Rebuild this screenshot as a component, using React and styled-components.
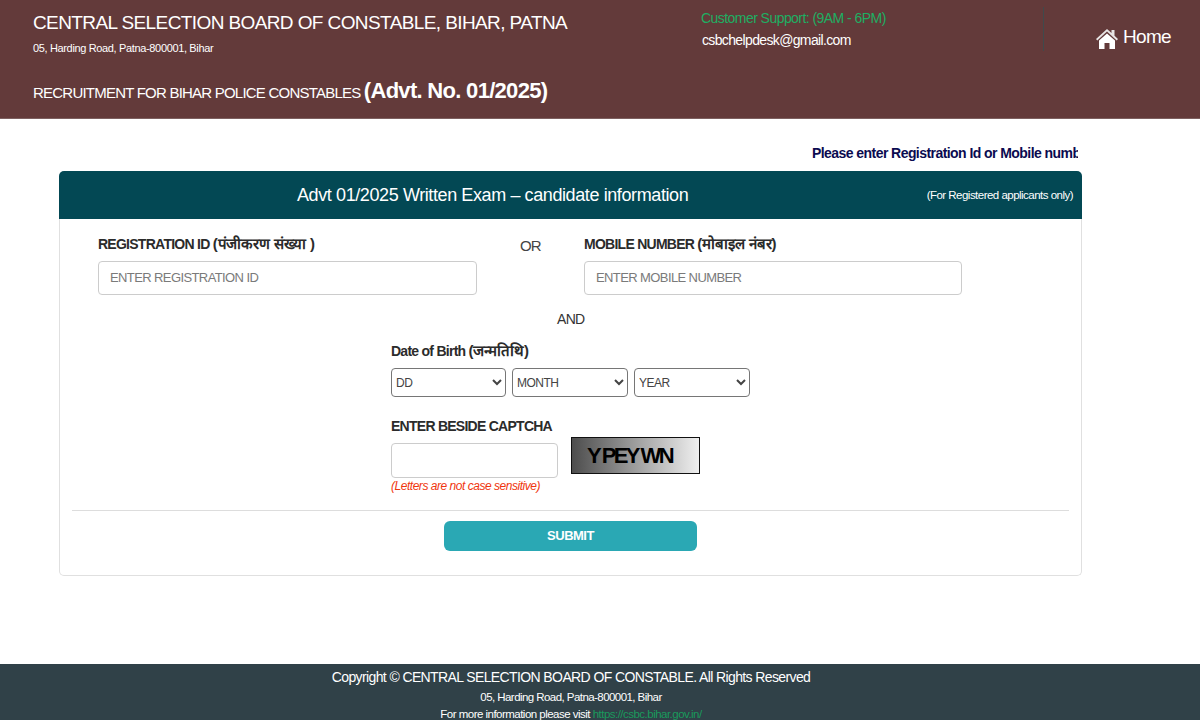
import React from "react";
import styled, { createGlobalStyle } from "styled-components";

const GlobalStyle = createGlobalStyle`
  html, body {
    margin: 0;
    padding: 0;
    background: #fff;
    font-family: "Liberation Sans", Arial, sans-serif;
  }
  * { box-sizing: border-box; }
`;

const Page = styled.div`
  width: 1200px;
  height: 720px;
  overflow: hidden;
  display: flex;
  flex-direction: column;
`;

const Header = styled.header`
  height: 119px;
  flex: none;
  background: #633a3a;
  border-bottom: 1px solid #7d6060;
  display: flex;
  color: #fff;
`;

const Brand = styled.div`
  width: 700px;
  padding: 11px 0 0 33px;
`;

const BoardName = styled.div`
  font-size: 19px;
  line-height: 23px;
  letter-spacing: -0.6px;
`;

const BoardAddress = styled.div`
  margin-top: 8px;
  font-size: 11px;
  line-height: 13px;
  letter-spacing: -0.35px;
`;

const Recruitment = styled.div`
  margin-top: 22px;
  font-size: 15px;
  line-height: 28px;
  letter-spacing: -0.78px;

  b {
    font-size: 22px;
    letter-spacing: -0.7px;
  }
`;

const Support = styled.div`
  width: 343px;
  padding: 10px 0 0 1px;
`;

const SupportTime = styled.div`
  font-size: 14px;
  line-height: 16px;
  color: #1eae62;
  letter-spacing: -0.55px;
`;

const SupportMail = styled.div`
  margin: 6px 0 0 1px;
  font-size: 14px;
  line-height: 16px;
  letter-spacing: -0.64px;
`;

const HomeCell = styled.div`
  margin-top: 7px;
  height: 44px;
  flex: 1;
  border-left: 1px solid #3f4a4c;
  display: flex;
  align-items: center;
  padding: 16px 0 0 51px;
  gap: 4px;
  font-size: 19px;
  letter-spacing: -0.7px;
`;

const Main = styled.main`
  flex: 1;
  padding: 25px 0 0 59px;
`;

const NoticeRow = styled.div`
  width: 1019px;
  height: 27px;
  display: flex;
  justify-content: flex-end;
`;

const Notice = styled.div`
  width: 266px;
  overflow: hidden;
  white-space: nowrap;
  font-size: 14px;
  line-height: 18px;
  font-weight: bold;
  color: #0b0b50;
  letter-spacing: -0.56px;
`;

const Card = styled.section`
  width: 1023px;
`;

const CardHead = styled.div`
  height: 48px;
  border-radius: 5px 5px 0 0;
  background: #034854;
  color: #fff;
  display: flex;
  align-items: center;
  justify-content: space-between;
  padding: 0 9px 0 238px;
`;

const CardTitle = styled.div`
  font-size: 18px;
  letter-spacing: -0.4px;
`;

const CardNote = styled.div`
  font-size: 11.5px;
  letter-spacing: -0.52px;
`;

const CardBody = styled.div`
  height: 357px;
  padding: 17px 12px 0;
  border: 1px solid #e0e0e0;
  border-top: 0;
  border-radius: 0 0 5px 5px;
`;

const IdRow = styled.div`
  display: flex;
  padding-left: 26px;
`;

const Field = styled.div`
  width: ${(p) => p.$w}px;
`;

const Label = styled.label`
  display: block;
  font-size: 14px;
  line-height: 16px;
  font-weight: bold;
  color: #2b2b2b;
  letter-spacing: -0.74px;
  margin-bottom: 9px;
  white-space: nowrap;
`;

const Hindi = styled.span`
  font-size: 15px;
  letter-spacing: -0.1px;
`;

const TextInput = styled.input`
  display: block;
  width: 100%;
  height: ${(p) => p.$h || 34}px;
  padding: 0 11px 2px;
  border: 1px solid #ccc;
  border-radius: 4px;
  background: #fff;
  font-family: "Liberation Sans", Arial, sans-serif;
  font-size: 13px;
  letter-spacing: -0.6px;
  &::placeholder {
    color: #7a7a7a;
    opacity: 1;
  }
`;

const OrCell = styled.div`
  width: 107px;
  padding: 1px 0 0 43px;
  font-size: 15px;
  line-height: 18px;
  color: #444;
  letter-spacing: -0.9px;
`;

const AndCell = styled.div`
  margin-top: 16px;
  padding-left: 485px;
  font-size: 14px;
  line-height: 16px;
  color: #333;
  letter-spacing: -0.7px;
`;

const Block = styled.div`
  margin-top: ${(p) => p.$top}px;
  padding-left: 319px;
`;

const Selects = styled.div`
  display: flex;
  gap: 6px;
`;

const Select = styled.select`
  width: ${(p) => p.$w}px;
  height: 29px;
  padding: 0;
  border: 1px solid #767676;
  border-radius: 4px;
  background: #fff;
  font-family: "Liberation Sans", Arial, sans-serif;
  font-size: 12px;
  color: #444;
  letter-spacing: -0.5px;
`;

const CaptchaRow = styled.div`
  display: flex;
  align-items: flex-start;
  gap: 13px;
`;

const CaptchaBox = styled.div`
  width: 129px;
  height: 37px;
  margin-top: -6px;
  border: 1px solid #111;
  background: linear-gradient(to right, #4d4d4d, #efefef);
  display: flex;
  align-items: center;
  padding-left: 15px;
  font-size: 22px;
  font-weight: bold;
  color: #000;
  letter-spacing: -2.6px;
  word-spacing: -0.5px;
`;

const CaseNote = styled.div`
  margin-top: 1px;
  font-size: 12px;
  line-height: 15px;
  font-style: italic;
  color: #f0360e;
  letter-spacing: -0.47px;
`;

const Divider = styled.hr`
  margin: 16px 0 10px;
  border: 0;
  border-top: 1px solid #ddd;
`;

const SubmitRow = styled.div`
  display: flex;
  justify-content: center;
`;

const Submit = styled.button`
  width: 253px;
  height: 30px;
  padding: 0 0 2px;
  border: 0;
  border-radius: 6px;
  background: #2aa8b4;
  color: #fff;
  font-family: "Liberation Sans", Arial, sans-serif;
  font-size: 13px;
  font-weight: bold;
  letter-spacing: -0.5px;
`;

const Footer = styled.footer`
  height: 56px;
  flex: none;
  background: #304148;
  color: #fff;
  text-align: center;
  padding: 4px 58px 0 0;
  overflow: hidden;
`;

const FooterLine = styled.div`
  font-size: ${(p) => p.$size}px;
  line-height: ${(p) => p.$line}px;
  letter-spacing: ${(p) => p.$track}px;

  a {
    color: #1a9a5c;
    text-decoration: none;
  }
`;

const HomeIcon = () => (
  <svg width="24" height="23" viewBox="0 0 24 23">
    <path d="M12 3 1 13l1.3 1.4L12 5.6l9.7 8.8L23 13 19.5 9.8V4h-3v3L12 3z" fill="#e8e4e4" />
    <path d="M12 7.4 4 14.6V23h5.5v-6h5v6H20v-8.4L12 7.4z" fill="#fff" />
  </svg>
);

export default function App() {
  return (
    <Page>
      <GlobalStyle />
      <Header>
        <Brand>
          <BoardName>CENTRAL SELECTION BOARD OF CONSTABLE, BIHAR, PATNA</BoardName>
          <BoardAddress>05, Harding Road, Patna-800001, Bihar</BoardAddress>
          <Recruitment>
            RECRUITMENT FOR BIHAR POLICE CONSTABLES <b>(Advt. No. 01/2025)</b>
          </Recruitment>
        </Brand>
        <Support>
          <SupportTime>Customer Support: (9AM - 6PM)</SupportTime>
          <SupportMail>csbchelpdesk@gmail.com</SupportMail>
        </Support>
        <HomeCell>
          <HomeIcon />
          Home
        </HomeCell>
      </Header>
      <Main>
        <NoticeRow>
          <Notice>Please enter Registration Id or Mobile number</Notice>
        </NoticeRow>
        <Card>
          <CardHead>
            <CardTitle>Advt 01/2025 Written Exam – candidate information</CardTitle>
            <CardNote>(For Registered applicants only)</CardNote>
          </CardHead>
          <CardBody>
            <IdRow>
              <Field $w={379}>
                <Label>REGISTRATION ID <Hindi>(पंजीकरण संख्या )</Hindi></Label>
                <TextInput placeholder="ENTER REGISTRATION ID" />
              </Field>
              <OrCell>OR</OrCell>
              <Field $w={378}>
                <Label>MOBILE NUMBER <Hindi>(मोबाइल नंबर)</Hindi></Label>
                <TextInput placeholder="ENTER MOBILE NUMBER" />
              </Field>
            </IdRow>
            <AndCell>AND</AndCell>
            <Block $top={16}>
              <Label>Date of Birth <Hindi>(जन्मतिथि)</Hindi></Label>
              <Selects>
                <Select $w={115}><option>DD</option></Select>
                <Select $w={116}><option>MONTH</option></Select>
                <Select $w={116}><option>YEAR</option></Select>
              </Selects>
            </Block>
            <Block $top={21}>
              <Label>ENTER BESIDE CAPTCHA</Label>
              <CaptchaRow>
                <Field $w={167}>
                  <TextInput $h={35} />
                </Field>
                <CaptchaBox>Y PEY WN</CaptchaBox>
              </CaptchaRow>
              <CaseNote>(Letters are not case sensitive)</CaseNote>
            </Block>
            <Divider />
            <SubmitRow>
              <Submit>SUBMIT</Submit>
            </SubmitRow>
          </CardBody>
        </Card>
      </Main>
      <Footer>
        <FooterLine $size={14} $line={18} $track={-0.61}>
          Copyright © CENTRAL SELECTION BOARD OF CONSTABLE. All Rights Reserved
        </FooterLine>
        <FooterLine $size={11.5} $line={22} $track={-0.56}>05, Harding Road, Patna-800001, Bihar</FooterLine>
        <FooterLine $size={11.5} $line={12} $track={-0.52}>
          For more information please visit <a href="#csbc">https://csbc.bihar.gov.in/</a>
        </FooterLine>
      </Footer>
    </Page>
  );
}
